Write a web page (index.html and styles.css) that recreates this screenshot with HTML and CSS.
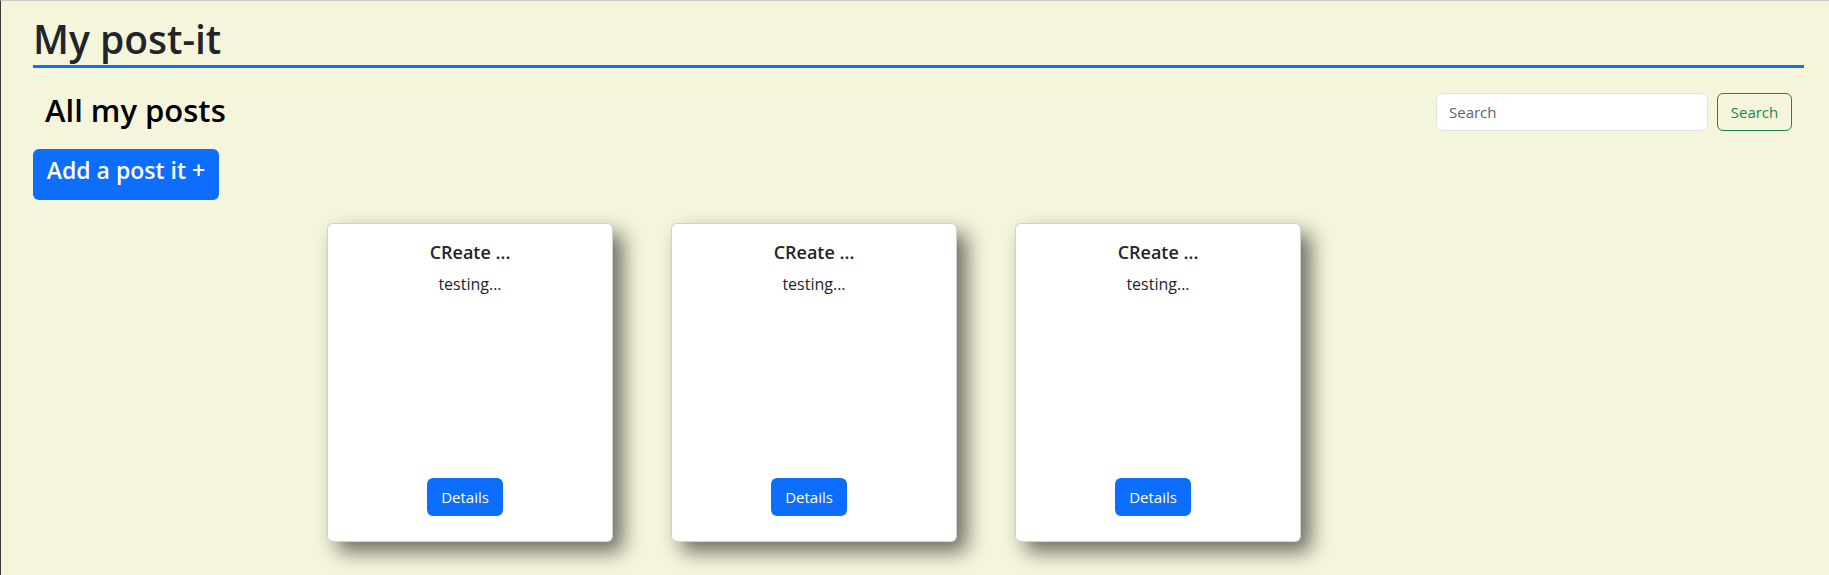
FILE: index.html
```html
<!DOCTYPE html>
<html lang="en">
<head>
<meta charset="utf-8">
<title>My post-it</title>
<link rel="stylesheet" href="styles.css">
</head>
<body>
<div class="frame">
  <header class="page-header">
    <h1 class="brand">My post-it</h1>
  </header>
  <div class="toolbar">
    <h2 class="section-title">All my posts</h2>
    <form class="search" onsubmit="return false">
      <input class="search-input" type="search" placeholder="Search">
      <button class="btn-outline-success" type="submit">Search</button>
    </form>
  </div>
  <button class="btn-add">Add a post it +</button>
  <div class="cards">
    <div class="card">
      <h5 class="card-title">CReate ...</h5>
      <p class="card-text">testing...</p>
      <button class="btn-details">Details</button>
    </div>
    <div class="card">
      <h5 class="card-title">CReate ...</h5>
      <p class="card-text">testing...</p>
      <button class="btn-details">Details</button>
    </div>
    <div class="card">
      <h5 class="card-title">CReate ...</h5>
      <p class="card-text">testing...</p>
      <button class="btn-details">Details</button>
    </div>
  </div>
</div>
</body>
</html>
```

FILE: styles.css
```css
* { box-sizing: border-box; }
html, body {
  margin: 0;
  padding: 0;
  height: 100%;
}
body {
  background: #f5f5dc;
  font-family: "Open Sans", "Noto Sans", sans-serif;
  color: #212529;
  overflow: hidden;
}
.frame {
  height: 100%;
  border-top: 1px solid #c9c9c9;
  border-left: 1px solid #3a3a3a;
  padding: 0 25px 0 32px;
}
.page-header {
  border-bottom: 3px solid #0d6efd;
  padding-top: 12px;
}
.brand {
  margin: 0;
  font-size: 39px;
  font-weight: 600;
  line-height: 52px;
  color: #212529;
  padding-left: 0;
}
.toolbar {
  display: flex;
  align-items: flex-start;
  justify-content: space-between;
  padding: 23px 12px 0 12px;
}
.section-title {
  margin: 0;
  font-size: 31px;
  font-weight: 600;
  line-height: 38px;
  color: #000;
}
.search {
  display: flex;
  gap: 9px;
  margin-top: 2px;
}
.search-input {
  width: 272px;
  height: 38px;
  border: 1px solid #dee2e6;
  border-radius: 6px;
  background: #fff;
  padding: 6px 12px;
  font: 15px "Open Sans", sans-serif;
  color: #212529;
}
.search-input::placeholder { color: #5c636a; }
.btn-outline-success {
  width: 75px;
  height: 38px;
  border: 1px solid #198754;
  border-radius: 6px;
  background: transparent;
  color: #198754;
  font: 15px "Open Sans", sans-serif;
  padding: 0;
}
.btn-add {
  margin-top: 18px;
  width: 186px;
  height: 51px;
  border: none;
  border-radius: 6px;
  background: #0d6efd;
  color: #fff;
  font: 600 23px "Open Sans", sans-serif;
  padding: 0 0 10px 0;
  text-align: center;
}
.cards {
  display: flex;
  gap: 58px;
  padding-left: 294px;
  margin-top: 23px;
}
.card {
  width: 286px;
  height: 319px;
  background: #fff;
  border: 1px solid rgba(0,0,0,.175);
  border-radius: 6px;
  box-shadow: 10px 10px 20px rgba(0,0,0,0.55);
  display: flex;
  flex-direction: column;
  align-items: center;
  padding: 16px 16px 25px;
}
.card-title {
  margin: 0 0 8px;
  font-size: 18px;
  font-weight: 600;
  line-height: 24px;
  color: #212529;
}
.card-text {
  margin: 0;
  font-size: 16px;
  line-height: 24px;
  color: #212529;
}
.btn-details {
  margin-top: auto;
  margin-right: 10px;
  width: 76px;
  height: 38px;
  border: none;
  border-radius: 6px;
  background: #0d6efd;
  color: #fff;
  font: 15px "Open Sans", sans-serif;
  padding: 0;
}
```
